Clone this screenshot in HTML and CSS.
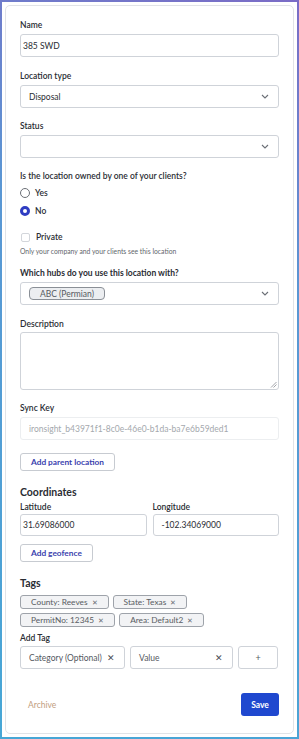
FILE: index.html
```html
<!DOCTYPE html>
<html>
<head>
<meta charset="utf-8">
<link rel="stylesheet" href="styles.css">
</head>
<body>
<div class="frame">
  <div class="frame-inner">
    <div class="card">
      <div class="field">
        <div class="lbl">Name</div>
        <div class="ctl tight">385 SWD</div>
      </div>
      <div class="field mt13">
        <div class="lbl">Location type</div>
        <div class="ctl sel"><span>Disposal</span><svg class="chev" width="8" height="5" viewBox="0 0 8 5"><polyline points="1,1 4,4 7,1" fill="none" stroke="#6b6f76" stroke-width="1.1"/></svg></div>
      </div>
      <div class="field mt12">
        <div class="lbl">Status</div>
        <div class="ctl sel"><span></span><svg class="chev" width="8" height="5" viewBox="0 0 8 5"><polyline points="1,1 4,4 7,1" fill="none" stroke="#6b6f76" stroke-width="1.1"/></svg></div>
      </div>
      <div class="lbl q mt12">Is the location owned by one of your clients?</div>
      <div class="opt mt5"><span class="radio"></span><span>Yes</span></div>
      <div class="opt mt6"><span class="radio on"></span><span>No</span></div>
      <div class="opt mt14"><span class="check"></span><span>Private</span></div>
      <div class="help">Only your company and your clients see this location</div>
      <div class="field mt11">
        <div class="lbl strong">Which hubs do you use this location with?</div>
        <div class="ctl sel hubs"><span class="hub">ABC (Permian)</span><svg class="chev" width="8" height="5" viewBox="0 0 8 5"><polyline points="1,1 4,4 7,1" fill="none" stroke="#6b6f76" stroke-width="1.1"/></svg></div>
      </div>
      <div class="field mt13">
        <div class="lbl nb2">Description</div>
        <div class="ctl area"><svg class="grip" width="7" height="7" viewBox="0 0 7 7"><line x1="1" y1="6.5" x2="6.5" y2="1" stroke="#8a8e94" stroke-width="0.8"/><line x1="3.5" y1="6.5" x2="6.5" y2="3.5" stroke="#8a8e94" stroke-width="0.8"/></svg></div>
      </div>
      <div class="field mt12">
        <div class="lbl">Sync Key</div>
        <div class="ctl disabled">ironsight_b43971f1-8c0e-46e0-b1da-ba7e6b59ded1</div>
      </div>
      <div class="btnrow mt13"><span class="btn">Add parent location</span></div>
      <div class="heading mt14">Coordinates</div>
      <div class="coords mt2">
        <div class="field">
          <div class="lbl nb">Latitude</div>
          <div class="ctl tight h22">31.69086000</div>
        </div>
        <div class="field">
          <div class="lbl nb">Longitude</div>
          <div class="ctl h22">-102.34069000</div>
        </div>
      </div>
      <div class="btnrow mt8"><span class="btn">Add geofence</span></div>
      <div class="heading mt14">Tags</div>
      <div class="tags mt5">
        <div class="tagrow"><span class="tag">County: Reeves<span class="x">✕</span></span><span class="tag">State: Texas<span class="x">✕</span></span></div>
        <div class="tagrow"><span class="tag">PermitNo: 12345<span class="x">✕</span></span><span class="tag">Area: Default2<span class="x">✕</span></span></div>
      </div>
      <div class="lbl mt5 nb2">Add Tag</div>
      <div class="addtag">
        <div class="ctl sel cat"><span>Category (Optional)</span><span class="xx">✕</span></div>
        <div class="ctl sel val"><span>Value</span><span class="xx">✕</span></div>
        <div class="ctl plus">+</div>
      </div>
      <div class="footer">
        <span class="archive">Archive</span>
        <span class="save">Save</span>
      </div>
    </div>
  </div>
</div>
</body>
</html>
```
FILE: styles.css
```css
* { box-sizing: border-box; }
body {
  margin: 0;
  font-family: Lato, "Noto Sans", sans-serif;
  color: #2a2d33;
  background: #fff;
}
.frame {
  width: 299px;
  height: 739px;
  padding: 2px;
  background: linear-gradient(200deg, #7b6cc6 0%, #5a97d4 35%, #47a7d6 100%);
}
.frame-inner {
  background: #fff;
  height: 100%;
  padding: 3px;
}
.card {
  height: 100%;
  border: 1px solid #e1e3e7;
  border-radius: 5px;
  padding: 13px 14px 0 14px;
  display: flex;
  flex-direction: column;
  font-size: 8.5px;
}
.card > * { flex-shrink: 0; }
.field { display: flex; flex-direction: column; }
.lbl {
  font-size: 8.5px;
  line-height: 12px;
  font-weight: 600;
  color: #2a2d33;
  margin-bottom: 3px;
}
.lbl.q { margin-bottom: 0; }
.lbl.strong { font-weight: 700; }
.lbl.nb { margin-bottom: 1px; }
.lbl.nb2 { margin-bottom: 2px; }
.ctl {
  height: 23px;
  border: 1px solid #cfd3d9;
  border-radius: 3px;
  display: flex;
  align-items: center;
  padding: 0 8px;
  font-size: 8.5px;
  color: #2a2d33;
  background: #fff;
}
.ctl.h22 { height: 22px; }
.ctl.tight { padding-left: 2px; }
.sel { justify-content: space-between; }
.chev { margin-right: 1px; }
.hubs { padding-left: 8px; }
.hub {
  display: inline-flex;
  align-items: center;
  height: 13px;
  padding: 0 10px;
  border: 1px solid #8a8f96;
  border-radius: 4px;
  background: #eceef1;
  color: #55595f;
  font-size: 8.5px;
}
.area {
  height: 58px;
  position: relative;
}
.grip { position: absolute; right: 1px; bottom: 1px; }
.disabled {
  border-color: #eceef0;
  color: #a4a8ad;
}
.mt2 { margin-top: 2px; }
.mt5 { margin-top: 5px; }
.mt6 { margin-top: 6px; }
.mt7 { margin-top: 7px; }
.mt8 { margin-top: 8px; }
.mt11 { margin-top: 11px; }
.mt12 { margin-top: 12px; }
.mt13 { margin-top: 13px; }
.mt14 { margin-top: 14px; }
.opt {
  display: flex;
  align-items: center;
  gap: 5px;
  height: 12px;
  font-size: 8.5px;
  font-weight: 600;
  color: #2a2d33;
}
.radio {
  width: 10px;
  height: 10px;
  border-radius: 50%;
  border: 1px solid #6b6f76;
  background: #fff;
}
.radio.on { border: 3px solid #2f3dc2; }
.check {
  width: 9px;
  height: 9px;
  margin-left: 1px;
  margin-right: 1px;
  border: 1px solid #d3d6db;
  border-radius: 2px;
}
.help {
  margin-top: 3px;
  font-size: 6.8px;
  line-height: 10px;
  color: #62666c;
}
.btnrow { display: flex; }
.btn {
  display: inline-flex;
  align-items: center;
  height: 18px;
  padding: 0 10px;
  border: 1px solid #c7cbd1;
  border-radius: 3px;
  font-size: 8.3px;
  font-weight: 700;
  color: #3b3fae;
  background: #fff;
}
.heading {
  font-size: 10.5px;
  line-height: 14px;
  font-weight: 700;
  color: #2a2d33;
}
.coords {
  display: grid;
  grid-template-columns: 1fr 1fr;
  column-gap: 6px;
}
.tags { display: flex; flex-direction: column; gap: 4px; }
.tagrow { display: flex; gap: 4px; }
.tag {
  display: inline-flex;
  align-items: center;
  height: 14px;
  padding: 0 10px 0 10px;
  border: 1px solid #9ea3aa;
  border-radius: 3px;
  background: #f2f3f5;
  font-size: 8.3px;
  color: #585c62;
  white-space: pre;
}
.tag .x { font-size: 7px; color: #6a6e74; margin-left: 4px; }
.addtag {
  display: grid;
  grid-template-columns: 105px 103px 40px;
  column-gap: 5px;
  height: 23px;
}
.addtag .ctl { color: #55595f; }
.xx { font-size: 9px; color: #4a4e54; margin-right: 1px; }
.plus {
  justify-content: center;
  color: #3b3fae;
  font-size: 9px;
}
.footer {
  margin-top: 24px;
  display: flex;
  justify-content: space-between;
  align-items: center;
}
.archive {
  margin-left: 8px;
  font-size: 8.5px;
  color: #c29e80;
}
.save {
  display: inline-flex;
  align-items: center;
  justify-content: center;
  width: 38px;
  height: 23px;
  border-radius: 3px;
  background: #1f48cf;
  color: #fff;
  font-size: 8.5px;
  font-weight: 700;
}
```
